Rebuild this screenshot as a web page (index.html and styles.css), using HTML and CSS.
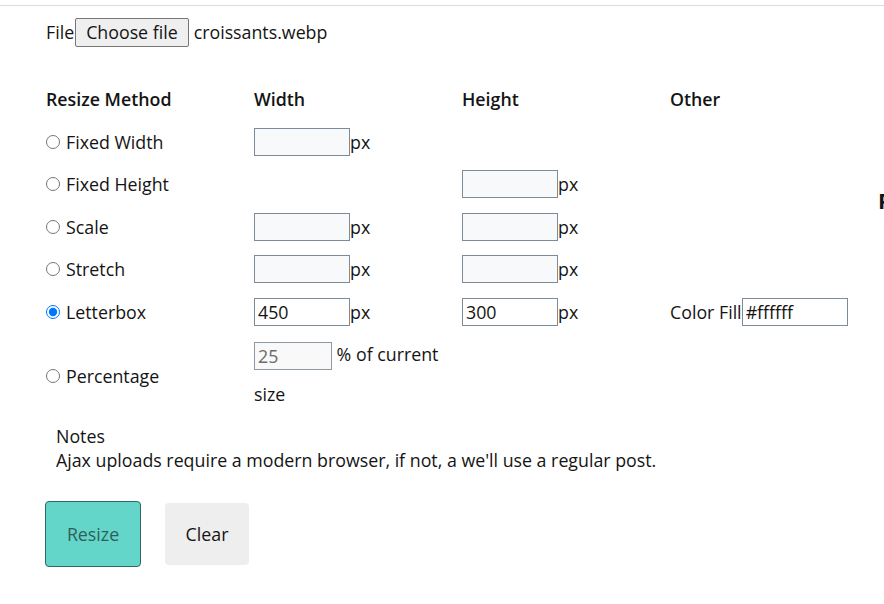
FILE: index.html
```html
<!DOCTYPE html>
<html>
<head>
<meta charset="utf-8">
<link rel="stylesheet" href="styles.css">
</head>
<body>
<div class="topline"></div>
<div class="page">
  <main class="main">
    <div class="file-row">
      <span>File</span><button class="file-btn" type="button">Choose file</button><span class="file-name">croissants.webp</span>
    </div>
    <div class="methods">
      <div class="head">Resize Method</div>
      <div class="head">Width</div>
      <div class="head">Height</div>
      <div class="head">Other</div>

      <label class="method"><input type="radio" name="m">Fixed Width</label>
      <div class="cell"><input class="num" type="text">px</div>
      <div class="cell"></div>
      <div class="cell"></div>

      <label class="method"><input type="radio" name="m">Fixed Height</label>
      <div class="cell"></div>
      <div class="cell"><input class="num" type="text">px</div>
      <div class="cell"></div>

      <label class="method"><input type="radio" name="m">Scale</label>
      <div class="cell"><input class="num" type="text">px</div>
      <div class="cell"><input class="num" type="text">px</div>
      <div class="cell"></div>

      <label class="method"><input type="radio" name="m">Stretch</label>
      <div class="cell"><input class="num" type="text">px</div>
      <div class="cell"><input class="num" type="text">px</div>
      <div class="cell"></div>

      <label class="method"><input type="radio" name="m" checked>Letterbox</label>
      <div class="cell"><input class="num filled" type="text" value="450">px</div>
      <div class="cell"><input class="num filled" type="text" value="300">px</div>
      <div class="cell">Color Fill<input class="color filled" type="text" value="#ffffff"></div>

      <label class="method tall"><input type="radio" name="m">Percentage</label>
      <div class="pct-cell"><input class="pct" type="text" value="25" disabled> % of current size</div>
      <div class="cell tall"></div>
      <div class="cell tall"></div>
    </div>
    <div class="notes">
      <div>Notes</div>
      <div>Ajax uploads require a modern browser, if not, a we'll use a regular post.</div>
    </div>
    <div class="actions">
      <button class="btn btn-primary" type="button">Resize</button>
      <button class="btn btn-plain" type="button">Clear</button>
    </div>
  </main>
  <aside class="aside">
    <h2 class="aside-title">Preview</h2>
  </aside>
</div>
</body>
</html>
```

FILE: styles.css
```css
html, body {
  margin: 0;
  padding: 0;
  background: #fff;
  overflow-x: hidden;
}
body {
  font-family: "Open Sans", "Liberation Sans", sans-serif;
  font-size: 17.8px;
  color: #141414;
}
.topline {
  margin-top: 5px;
  border-top: 1px solid #dcdcdc;
}
.page {
  display: flex;
}
.main {
  flex: 0 0 832px;
  padding-left: 46px;
}
.aside {
  flex: 1 1 auto;
  min-width: 0;
  overflow: hidden;
  white-space: nowrap;
}
.aside-title {
  margin: 179px 0 0 0;
  font-size: 22px;
  font-weight: 700;
  line-height: 30px;
}
.file-row {
  display: flex;
  align-items: center;
  height: 30px;
  margin-top: 11px;
}
.file-btn {
  font: inherit;
  color: #141414;
  height: 29px;
  padding: 0 10px;
  margin: 0 5px 0 1px;
  background: #efefef;
  border: 1px solid #767676;
  border-radius: 2px;
}
.methods {
  display: grid;
  grid-template-columns: repeat(4, 208px);
  grid-auto-rows: 42.5px;
  align-items: center;
  margin-top: 31px;
}
.head {
  font-weight: 600;
}
.method {
  display: flex;
  align-items: center;
}
.method input {
  width: 14px;
  height: 14px;
  margin: 0 6px 0 0;
}
.tall {
  grid-row: span 2;
}
.cell {
  display: flex;
  align-items: center;
}
.num, .color, .pct {
  box-sizing: border-box;
  height: 28px;
  font: inherit;
  color: #141414;
  border: 1px solid #7d8a97;
  background: #f8f9fa;
  padding: 0 3px;
  margin: 0;
}
.num { width: 96px; }
.color { width: 106px; }
.filled { background: #ffffff; }
.pct-cell {
  grid-row: span 2;
  align-self: start;
  padding-top: 1px;
  padding-right: 20px;
  line-height: 40px;
}
.pct {
  width: 78px;
  color: #6b6b6b;
  background: #f9f9f9;
  border-color: #8e98a3;
  vertical-align: middle;
}
.notes {
  margin: 6px 0 0 10px;
  line-height: 24px;
}
.actions {
  display: flex;
  align-items: center;
  gap: 24px;
  margin-top: 29px;
  margin-left: -1px;
}
.btn {
  font: inherit;
  border-radius: 4px;
  cursor: pointer;
}
.btn-primary {
  width: 96px;
  height: 66px;
  background: #63d6c9;
  color: #2f5f5a;
  border: 1px solid #2d6a65;
}
.btn-plain {
  width: 84px;
  height: 62px;
  background: #eeeeee;
  color: #141414;
  border: none;
}
```
